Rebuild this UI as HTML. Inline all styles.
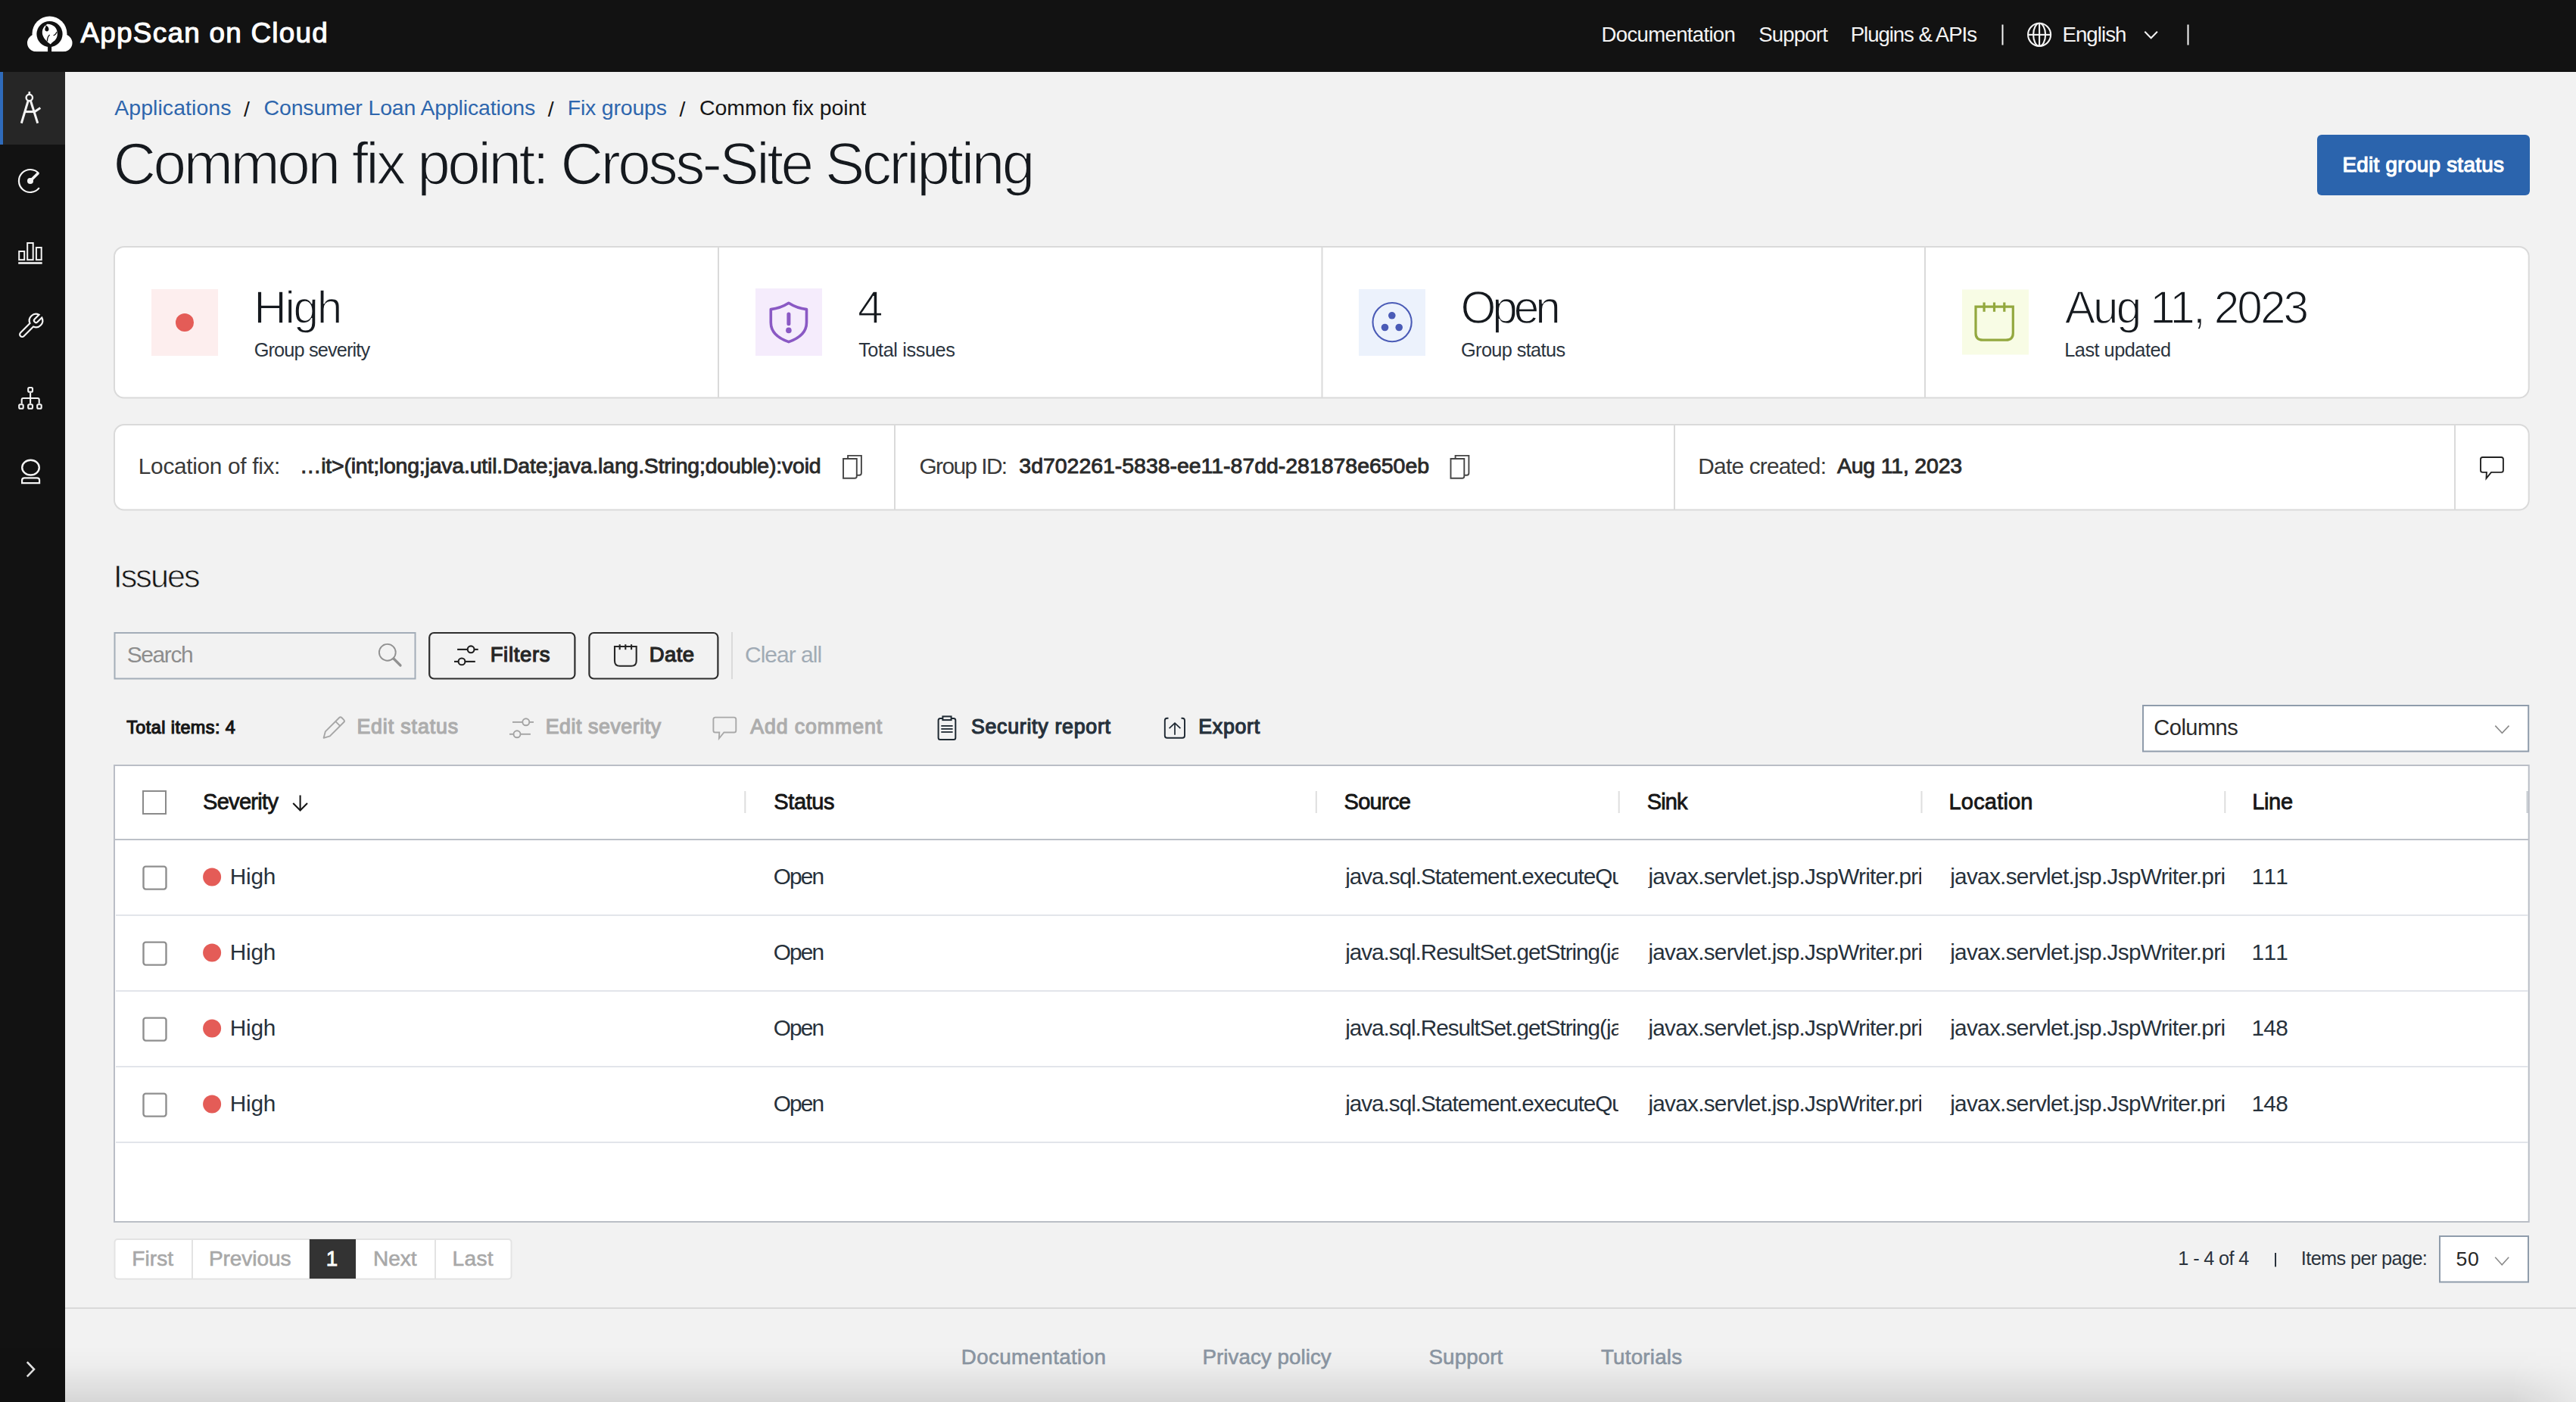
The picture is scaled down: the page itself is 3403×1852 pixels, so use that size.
<!DOCTYPE html>
<html><head><meta charset="utf-8"><title>Common fix point: Cross-Site Scripting</title>
<style>
html,body{margin:0;padding:0;}
body{width:3403px;height:1852px;overflow:hidden;position:relative;background:#f2f2f2;font-family:"Liberation Sans",sans-serif;}
.ov{position:absolute;left:0;top:0;}
.t{position:absolute;white-space:nowrap;line-height:1;}
.shade{position:absolute;left:0;top:1778px;width:3403px;height:74px;background:linear-gradient(to bottom,rgba(0,0,0,0) 0%,rgba(0,0,0,0.02) 35%,rgba(0,0,0,0.07) 70%,rgba(0,0,0,0.115) 100%);pointer-events:none;-webkit-mask-image:linear-gradient(to right,#000 0%,#000 97.5%,rgba(0,0,0,0.35) 100%);mask-image:linear-gradient(to right,#000 0%,#000 97.5%,rgba(0,0,0,0.35) 100%);}
</style></head><body>

<svg class="ov" width="3403" height="1852" viewBox="0 0 3403 1852"><rect x="0" y="0" width="3403" height="95" fill="#121212"/><rect x="0" y="95" width="86" height="1757" fill="#121212"/><rect x="0" y="95" width="86" height="96" fill="#262626"/><rect x="0" y="95" width="4" height="96" fill="#2f6bbb"/><g fill="#ffffff"><circle cx="65.5" cy="44.6" r="23"/><circle cx="47.4" cy="56.7" r="11.4"/><circle cx="84.1" cy="56.7" r="11.4"/><rect x="47.4" y="50" width="36.7" height="18.1"/></g><circle cx="65.5" cy="45" r="17.1" fill="#121212"/><rect x="63.1" y="56" width="5" height="13" fill="#121212"/><path d="M62.5 31.7 Q68.5 31.8 72.5 35.5 Q76.3 40 75.8 46 Q75 52 70.7 54.8 Q68.3 56.6 66.8 58.6 Q62.8 56 59.5 52 Q55.6 47 55.8 42 Q56.2 35.5 62.5 31.7 Z" fill="#ffffff"/><path d="M59.8 33.2 Q63.8 34.2 64.5 38.2 Q64.6 41.3 61.8 41.4 Q59.1 41.2 59.3 38.3 Q59.6 36.2 60.6 35.2 Z" fill="#121212"/><path d="M65.6 46 Q62.3 48.8 62.5 54.6" fill="none" stroke="#121212" stroke-width="1.3"/><path d="M75.2 42.2 Q73.6 45.6 70.6 47" fill="none" stroke="#121212" stroke-width="1.3"/><rect x="2644.5" y="32.5" width="2" height="27" fill="#f4f4f4"/><rect x="2889.5" y="32.5" width="2" height="27" fill="#f4f4f4"/><g fill="none" stroke="#f4f4f4" stroke-width="2.1"><circle cx="2694.1" cy="45.8" r="15"/><ellipse cx="2694.1" cy="45.8" rx="8" ry="15"/><line x1="2694.1" y1="30.8" x2="2694.1" y2="60.8"/><line x1="2679.1" y1="45.9" x2="2709.1" y2="45.9"/></g><polyline points="2833.3,41.8 2841.6,50.3 2849.9,41.8" fill="none" stroke="#f4f4f4" stroke-width="2"/><g fill="none" stroke="#f4f4f4" stroke-width="2.6" stroke-linecap="butt"><circle cx="38.8" cy="129" r="4.2" stroke-width="2.4"/><line x1="38.8" y1="121" x2="38.8" y2="125" stroke-width="2.6"/><line x1="37.2" y1="133" x2="28.3" y2="162.8" stroke-width="3"/><line x1="40.4" y1="133" x2="49.8" y2="162.8" stroke-width="3"/><line x1="33.8" y1="147.6" x2="46" y2="147.6" stroke-width="3"/><line x1="45.2" y1="148" x2="53.3" y2="142.6" stroke-width="3"/><path d="M51.3 229.2 A15 15 0 1 0 51.8 248.2" stroke-width="2.2"/><line x1="40" y1="239" x2="50.6" y2="228.4" stroke-width="3.6"/></g><circle cx="40" cy="239" r="4" fill="#f4f4f4"/><g fill="none" stroke="#f4f4f4" stroke-width="2"><rect x="25.2" y="332" width="7" height="11.2"/><rect x="36.2" y="321" width="7.5" height="22.2"/><rect x="47.9" y="327" width="6.8" height="16.2"/></g><rect x="24.2" y="346.2" width="31.5" height="2.6" fill="#f4f4f4"/><path transform="translate(40.3,430.8) rotate(45) scale(0.99) translate(0,-3.3)" fill="none" stroke="#f4f4f4" stroke-width="2.2" d="M-3.2 1.2 L-3.2 19 A3.2 3.2 0 0 0 3.2 19 L3.2 1.2 A8.8 8.8 0 0 0 2.7 -15.4 L2.7 -7.2 A2.7 2.7 0 0 1 -2.7 -7.2 L-2.7 -15.4 A8.8 8.8 0 0 0 -3.2 1.2Z"/><g fill="none" stroke="#f4f4f4" stroke-width="2.1"><rect x="37.2" y="512" width="5.8" height="5.7" rx="1.5"/><line x1="40.1" y1="518.7" x2="40.1" y2="533.2"/><path d="M28.7 533.2 V528 Q28.7 526 30.7 526 H49.7 Q51.7 526 51.7 528 V533.2"/><rect x="25.2" y="534.2" width="5.5" height="5.5" rx="1.5"/><rect x="37.2" y="534.2" width="5.8" height="5.5" rx="1.5"/><rect x="49.2" y="534.2" width="5.5" height="5.5" rx="1.5"/><ellipse cx="40.5" cy="617.6" rx="11.3" ry="9.9" stroke-width="2.4"/><path d="M29.1 638.1 V634.2 Q29.1 631.3 32.3 631.3 H49 Q52.1 631.3 52.1 634.2 V638.1 Z" stroke-width="2.2"/><polyline points="35.8,1799.2 45,1808.8 35.8,1818.4" stroke="#e6e6e6" stroke-width="2.6"/></g><rect x="3061" y="178" width="281" height="80" rx="6" fill="#2b64ad"/><rect x="151" y="326" width="3189.7" height="199.5" rx="13" fill="#ffffff" stroke="#dadada" stroke-width="2"/><rect x="948" y="327" width="2" height="198" fill="#dadada"/><rect x="1745.5" y="327" width="2" height="198" fill="#dadada"/><rect x="2542" y="327" width="2" height="198" fill="#dadada"/><rect x="200" y="382" width="88" height="88" fill="#fdeeee"/><circle cx="244" cy="426" r="12" fill="#e45c57"/><rect x="998" y="381" width="88" height="89" fill="#f5ecfc"/><path d="M1041.9 400.3 Q1031 407.3 1018.3 408.6 V426 Q1018.3 443.5 1041.9 451.6 Q1065.5 443.5 1065.5 426 V408.6 Q1052.8 407.3 1041.9 400.3 Z" fill="none" stroke="#8a59c4" stroke-width="3.6" stroke-linejoin="round"/><line x1="1041.9" y1="415" x2="1041.9" y2="427.8" stroke="#8a59c4" stroke-width="5" stroke-linecap="round"/><circle cx="1041.9" cy="436.4" r="3.8" fill="#8a59c4"/><rect x="1795" y="382" width="88" height="88" fill="#ecf2fc"/><circle cx="1839.1" cy="425.6" r="25.6" fill="none" stroke="#4a5bb6" stroke-width="2.1"/><g fill="#4a5bb6"><circle cx="1838.8" cy="416.8" r="4.8"/><circle cx="1829.5" cy="432.5" r="4.8"/><circle cx="1848.2" cy="432.5" r="4.8"/></g><rect x="2592" y="382.5" width="88" height="86" fill="#f8fce5"/><g fill="none" stroke="#93a83f" stroke-width="3.2"><path d="M2610 405.2 H2659.3 V440 Q2659.3 449.2 2650 449.2 H2619.3 Q2610 449.2 2610 440 Z"/><line x1="2621.1" y1="399.5" x2="2621.1" y2="411.8"/><line x1="2634.5" y1="399.5" x2="2634.5" y2="411.8"/><line x1="2647.8" y1="399.5" x2="2647.8" y2="411.8"/></g><rect x="151" y="561" width="3189.7" height="112.5" rx="13" fill="#ffffff" stroke="#dadada" stroke-width="2"/><rect x="1181" y="562" width="2" height="111" fill="#dadada"/><rect x="2211" y="562" width="2" height="111" fill="#dadada"/><rect x="3242" y="562" width="2" height="111" fill="#dadada"/><g fill="none" stroke="#454545" stroke-width="1.9"><path d="M1114 606 H1131.8 V629 Q1131.8 631.8 1129 631.8 H1114 Z"/><path d="M1120.1 605.5 V601.9 H1137.9 V625 Q1137.9 627.7 1135.1 627.7 H1132"/></g><g transform="translate(802.5,0)"><g fill="none" stroke="#454545" stroke-width="1.9"><path d="M1114 606 H1131.8 V629 Q1131.8 631.8 1129 631.8 H1114 Z"/><path d="M1120.1 605.5 V601.9 H1137.9 V625 Q1137.9 627.7 1135.1 627.7 H1132"/></g></g><path d="M3279.6 604 H3304.3 Q3306.9 604 3306.9 606.6 V621.3 Q3306.9 623.9 3304.3 623.9 H3291 L3284.5 631.9 L3284.9 623.9 H3279.6 Q3277 623.9 3277 621.3 V606.6 Q3277 604 3279.6 604 Z" fill="none" stroke="#222222" stroke-width="1.9" stroke-linejoin="miter"/><rect x="151.5" y="836" width="397" height="60.5" fill="none" stroke="#a3adb8" stroke-width="2"/><g fill="none" stroke="#919191"><circle cx="511.8" cy="861.8" r="10.9" stroke-width="1.9"/><line x1="520" y1="870" x2="529" y2="879" stroke-width="3.2" stroke-linecap="round"/></g><rect x="567.2" y="836" width="192.2" height="60.5" rx="6" fill="none" stroke="#2e2e2e" stroke-width="2.2"/><rect x="778.4" y="836" width="170" height="60.5" rx="6" fill="none" stroke="#2e2e2e" stroke-width="2.2"/><g stroke="#1f1f1f" stroke-width="2.1" fill="#f2f2f2"><line x1="604.1" y1="857.9" x2="631.7" y2="857.9"/><circle cx="622.1" cy="857.8" r="4.4"/><line x1="600" y1="873.9" x2="627.8" y2="873.9"/><circle cx="610" cy="873.9" r="4.4"/></g><g fill="none" stroke="#262626" stroke-width="2.1"><path d="M812 854 H840.7 V873 Q840.7 879.8 834 879.8 H818.7 Q812 879.8 812 873 Z"/><line x1="818.7" y1="851.2" x2="818.7" y2="858.2"/><line x1="826.3" y1="851.2" x2="826.3" y2="858.2"/><line x1="834.1" y1="851.2" x2="834.1" y2="858.2"/></g><rect x="966" y="835" width="2" height="62" fill="#dadada"/><g fill="none" stroke="#a6a6a6" stroke-width="1.9" stroke-linejoin="round"><path d="M427.6 974.8 L429.8 966.4 L448.2 948 Q449.8 946.4 451.4 948 L454.2 950.8 Q455.8 952.4 454.2 954 L435.8 972.4 Z"/><line x1="443.4" y1="953.2" x2="449.4" y2="959.2"/></g><g stroke="#a4a4a4" stroke-width="1.9" fill="#f2f2f2"><line x1="677" y1="953.9" x2="705" y2="953.9"/><circle cx="694.8" cy="953.8" r="4.5"/><line x1="673" y1="969.8" x2="700.9" y2="969.8"/><circle cx="683" cy="969.8" r="4.5"/></g><g transform="translate(-2334.6,343.6)"><path d="M3279.6 604 H3304.3 Q3306.9 604 3306.9 606.6 V621.3 Q3306.9 623.9 3304.3 623.9 H3291 L3284.5 631.9 L3284.9 623.9 H3279.6 Q3277 623.9 3277 621.3 V606.6 Q3277 604 3279.6 604 Z" fill="none" stroke="#a9a9a9" stroke-width="1.9" stroke-linejoin="miter"/></g><g fill="none" stroke="#1f2a33" stroke-width="2"><rect x="1239.6" y="949" width="22.7" height="27.9" rx="2.5"/><rect x="1245.4" y="946.4" width="11.2" height="4.7" fill="#f2f2f2"/><line x1="1243.3" y1="958.9" x2="1258.6" y2="958.9" stroke-width="1.8"/><line x1="1243.3" y1="962.9" x2="1258.6" y2="962.9" stroke-width="1.8"/><line x1="1243.3" y1="967" x2="1258.6" y2="967" stroke-width="1.8"/></g><g fill="none" stroke="#1d2731" stroke-width="1.9"><path d="M1543.5 948.7 H1541.8 Q1538.8 948.7 1538.8 951.7 V971.7 Q1538.8 974.7 1541.8 974.7 H1562 Q1565 974.7 1565 971.7 V951.7 Q1565 948.7 1562 948.7 H1560.5"/><line x1="1552" y1="956" x2="1552" y2="970.8" stroke-width="1.7"/><polyline points="1544.6,962.1 1552,955.1 1559.4,962.1" stroke-width="1.7"/></g><rect x="2831" y="932" width="509.2" height="60.5" fill="#ffffff" stroke="#8f9cab" stroke-width="2"/><polyline points="3296.3,958.6 3305.4,968.4 3314.5,958.6" fill="none" stroke="#8a8a8a" stroke-width="1.6"/><rect x="151" y="1011" width="3189.7" height="603" fill="#ffffff" stroke="#babec6" stroke-width="2"/><rect x="151" y="1108" width="3190" height="2" fill="#bcc0c8"/><rect x="153" y="1208" width="3187" height="2" fill="#e2e5ea"/><rect x="153" y="1308" width="3187" height="2" fill="#e2e5ea"/><rect x="153" y="1408" width="3187" height="2" fill="#e2e5ea"/><rect x="153" y="1508" width="3187" height="2" fill="#e2e5ea"/><rect x="189" y="1045" width="30" height="30" fill="none" stroke="#8a8a8a" stroke-width="2"/><g fill="none" stroke="#161616" stroke-width="2.1"><line x1="396.6" y1="1050.5" x2="396.6" y2="1070"/><polyline points="387.2,1061 396.6,1070.4 406,1061"/></g><rect x="983.3" y="1045" width="2" height="29" fill="#dedede"/><rect x="1737.8" y="1045" width="2" height="29" fill="#dedede"/><rect x="2137.7" y="1045" width="2" height="29" fill="#dedede"/><rect x="2537.5" y="1045" width="2" height="29" fill="#dedede"/><rect x="2938.3" y="1045" width="2" height="29" fill="#dedede"/><rect x="3337.5" y="1045" width="2.5" height="29" fill="#c9ced4"/><rect x="189.5" y="1144.6" width="30" height="30" rx="3" fill="none" stroke="#8f8f8f" stroke-width="2.4"/><circle cx="280.1" cy="1158.4" r="12" fill="#e45c57"/><rect x="189.5" y="1244.6" width="30" height="30" rx="3" fill="none" stroke="#8f8f8f" stroke-width="2.4"/><circle cx="280.1" cy="1258.4" r="12" fill="#e45c57"/><rect x="189.5" y="1344.6" width="30" height="30" rx="3" fill="none" stroke="#8f8f8f" stroke-width="2.4"/><circle cx="280.1" cy="1358.4" r="12" fill="#e45c57"/><rect x="189.5" y="1444.6" width="30" height="30" rx="3" fill="none" stroke="#8f8f8f" stroke-width="2.4"/><circle cx="280.1" cy="1458.4" r="12" fill="#e45c57"/><rect x="151.5" y="1637" width="524" height="52.5" rx="4" fill="#ffffff" stroke="#e3e3e3" stroke-width="2"/><rect x="253" y="1637" width="2" height="52" fill="#e3e3e3"/><rect x="574" y="1637" width="2" height="52" fill="#e3e3e3"/><rect x="408.8" y="1637" width="61.2" height="52" fill="#333333"/><rect x="3005" y="1655" width="2" height="18.4" fill="#2a323c"/><rect x="3223" y="1633" width="117" height="60.5" fill="#ffffff" stroke="#8f9cab" stroke-width="2"/><polyline points="3296.2,1660.8 3305.2,1670.7 3314.2,1660.8" fill="none" stroke="#8a8a8a" stroke-width="1.6"/><rect x="86" y="1727" width="3317" height="2" fill="#d9d9d9"/></svg>
<div class="t" id="t0" style="left:106.48px;top:26.49px;font-size:36.92px;color:#ffffff;letter-spacing:1.238px;-webkit-text-stroke:1.10px #ffffff;"><span class="m" id="t0_p">AppScan on Cloud</span></div>
<div class="t" id="t1" style="left:2115.53px;top:31.72px;font-size:27.62px;color:#f4f4f4;letter-spacing:-0.695px;"><span class="m" id="t1_p">Documentation</span></div>
<div class="t" id="t2" style="left:2323.25px;top:31.72px;font-size:27.62px;color:#f4f4f4;letter-spacing:-0.858px;"><span class="m" id="t2_p">Support</span></div>
<div class="t" id="t3" style="left:2444.73px;top:31.72px;font-size:27.62px;color:#f4f4f4;letter-spacing:-1.064px;"><span class="m" id="t3_p">Plugins &amp; APIs</span></div>
<div class="t" id="t4" style="left:2724.43px;top:31.72px;font-size:27.62px;color:#f4f4f4;letter-spacing:-0.917px;"><span class="m" id="t4_p">English</span></div>
<div class="t" id="t5" style="left:151.19px;top:128.48px;font-size:28.49px;color:#2e66ad;letter-spacing:0.067px;"><span class="m" id="t5_p">Applications</span></div>
<div class="t" id="t6" style="left:322.00px;top:130.48px;font-size:28.49px;color:#161616;"><span class="m" id="t6_p">/</span></div>
<div class="t" id="t7" style="left:348.55px;top:128.48px;font-size:28.49px;color:#2e66ad;letter-spacing:-0.155px;"><span class="m" id="t7_p">Consumer Loan Applications</span></div>
<div class="t" id="t8" style="left:723.75px;top:130.48px;font-size:28.49px;color:#161616;"><span class="m" id="t8_p">/</span></div>
<div class="t" id="t9" style="left:749.66px;top:128.48px;font-size:28.49px;color:#2e66ad;letter-spacing:-0.180px;"><span class="m" id="t9_p">Fix groups</span></div>
<div class="t" id="t10" style="left:897.50px;top:130.48px;font-size:28.49px;color:#161616;"><span class="m" id="t10_p">/</span></div>
<div class="t" id="t11" style="left:924.05px;top:128.48px;font-size:28.49px;color:#161616;letter-spacing:-0.099px;"><span class="m" id="t11_p">Common fix point</span></div>
<div class="t" id="t12" style="left:149.42px;top:177.37px;font-size:78.34px;color:#15191e;letter-spacing:-3.437px;-webkit-text-stroke:1.60px #f2f2f2;"><span class="m" id="t12_p">Common fix point: Cross-Site Scripting</span></div>
<div class="t" id="t13" style="left:3094.52px;top:203.89px;font-size:27.76px;color:#ffffff;letter-spacing:0.314px;-webkit-text-stroke:1.20px #ffffff;"><span class="m" id="t13_p">Edit group status</span></div>
<div class="t" id="t14" style="left:335.15px;top:376.23px;font-size:60.32px;color:#15191e;letter-spacing:-2.260px;-webkit-text-stroke:1.40px #ffffff;"><span class="m" id="t14_p">High</span></div>
<div class="t" id="t15" style="left:1132.92px;top:376.23px;font-size:60.32px;color:#15191e;-webkit-text-stroke:1.40px #ffffff;"><span class="m" id="t15_p">4</span></div>
<div class="t" id="t16" style="left:1929.44px;top:376.23px;font-size:60.32px;color:#15191e;letter-spacing:-5.058px;-webkit-text-stroke:1.40px #ffffff;"><span class="m" id="t16_p">Open</span></div>
<div class="t" id="t17" style="left:2727.78px;top:376.23px;font-size:60.32px;color:#15191e;letter-spacing:-2.910px;-webkit-text-stroke:1.40px #ffffff;"><span class="m" id="t17_p">Aug 11, 2023</span></div>
<div class="t" id="t18" style="left:335.73px;top:449.59px;font-size:25.29px;color:#2b343e;letter-spacing:-0.851px;"><span class="m" id="t18_p">Group severity</span></div>
<div class="t" id="t19" style="left:1134.13px;top:449.59px;font-size:25.29px;color:#2b343e;letter-spacing:-0.392px;"><span class="m" id="t19_p">Total issues</span></div>
<div class="t" id="t20" style="left:1930.03px;top:449.59px;font-size:25.29px;color:#2b343e;letter-spacing:-0.606px;"><span class="m" id="t20_p">Group status</span></div>
<div class="t" id="t21" style="left:2727.23px;top:449.59px;font-size:25.29px;color:#2b343e;letter-spacing:-0.482px;"><span class="m" id="t21_p">Last updated</span></div>
<div class="t" id="t22" style="left:182.86px;top:600.77px;font-size:29.80px;color:#393939;letter-spacing:-0.312px;"><span class="m" id="t22_p">Location of fix:</span></div>
<div class="t" id="t23" style="left:395.88px;top:601.43px;font-size:28.49px;color:#2a2a2a;letter-spacing:-0.209px;-webkit-text-stroke:0.90px #2a2a2a;"><span class="m" id="t23_p">…it&gt;(int;long;java.util.Date;java.lang.String;double):void</span></div>
<div class="t" id="t24" style="left:1214.50px;top:600.77px;font-size:29.80px;color:#393939;letter-spacing:-1.569px;"><span class="m" id="t24_p">Group ID:</span></div>
<div class="t" id="t25" style="left:1346.36px;top:601.43px;font-size:28.49px;color:#2a2a2a;letter-spacing:-0.031px;-webkit-text-stroke:0.90px #2a2a2a;"><span class="m" id="t25_p">3d702261-5838-ee11-87dd-281878e650eb</span></div>
<div class="t" id="t26" style="left:2243.36px;top:600.77px;font-size:29.80px;color:#393939;letter-spacing:-0.777px;"><span class="m" id="t26_p">Date created:</span></div>
<div class="t" id="t27" style="left:2426.89px;top:601.43px;font-size:28.49px;color:#2a2a2a;letter-spacing:-0.187px;-webkit-text-stroke:0.90px #2a2a2a;"><span class="m" id="t27_p">Aug 11, 2023</span></div>
<div class="t" id="t28" style="left:149.72px;top:739.85px;font-size:43.17px;color:#161616;letter-spacing:-1.958px;-webkit-text-stroke:0.80px #f2f2f2;"><span class="m" id="t28_p">Issues</span></div>
<div class="t" id="t29" style="left:167.64px;top:849.95px;font-size:29.94px;color:#8d8d8d;letter-spacing:-1.371px;"><span class="m" id="t29_p">Search</span></div>
<div class="t" id="t30" style="left:647.65px;top:851.34px;font-size:27.47px;color:#262626;letter-spacing:0.694px;-webkit-text-stroke:1.20px #262626;"><span class="m" id="t30_p">Filters</span></div>
<div class="t" id="t31" style="left:857.65px;top:851.34px;font-size:27.47px;color:#262626;letter-spacing:0.448px;-webkit-text-stroke:1.20px #262626;"><span class="m" id="t31_p">Date</span></div>
<div class="t" id="t32" style="left:983.98px;top:849.95px;font-size:29.94px;color:#a1abb5;letter-spacing:-0.961px;"><span class="m" id="t32_p">Clear all</span></div>
<div class="t" id="t33" style="left:167.17px;top:949.59px;font-size:23.40px;color:#161616;letter-spacing:0.455px;-webkit-text-stroke:1.20px #161616;"><span class="m" id="t33_p">Total items: 4</span></div>
<div class="t" id="t34" style="left:471.41px;top:947.36px;font-size:26.74px;color:#adadad;letter-spacing:0.883px;-webkit-text-stroke:1.20px #adadad;"><span class="m" id="t34_p">Edit status</span></div>
<div class="t" id="t35" style="left:720.71px;top:947.36px;font-size:26.74px;color:#adadad;letter-spacing:0.570px;-webkit-text-stroke:1.20px #adadad;"><span class="m" id="t35_p">Edit severity</span></div>
<div class="t" id="t36" style="left:991.25px;top:947.36px;font-size:26.74px;color:#adadad;letter-spacing:0.891px;-webkit-text-stroke:1.20px #adadad;"><span class="m" id="t36_p">Add comment</span></div>
<div class="t" id="t37" style="left:1282.89px;top:947.36px;font-size:26.74px;color:#26313b;letter-spacing:0.733px;-webkit-text-stroke:1.20px #26313b;"><span class="m" id="t37_p">Security report</span></div>
<div class="t" id="t38" style="left:1583.21px;top:947.36px;font-size:26.74px;color:#26313b;letter-spacing:0.742px;-webkit-text-stroke:1.20px #26313b;"><span class="m" id="t38_p">Export</span></div>
<div class="t" id="t39" style="left:2845.32px;top:946.69px;font-size:29.07px;color:#2b2b2b;letter-spacing:-0.543px;"><span class="m" id="t39_p">Columns</span></div>
<div class="t" id="t40" style="left:267.98px;top:1044.69px;font-size:29.07px;color:#161616;letter-spacing:-0.715px;-webkit-text-stroke:0.80px #161616;"><span class="m" id="t40_p">Severity</span></div>
<div class="t" id="t41" style="left:1022.28px;top:1044.69px;font-size:29.07px;color:#161616;letter-spacing:-0.407px;-webkit-text-stroke:0.80px #161616;"><span class="m" id="t41_p">Status</span></div>
<div class="t" id="t42" style="left:1775.58px;top:1044.69px;font-size:29.07px;color:#161616;letter-spacing:-0.756px;-webkit-text-stroke:0.80px #161616;"><span class="m" id="t42_p">Source</span></div>
<div class="t" id="t43" style="left:2175.78px;top:1044.69px;font-size:29.07px;color:#161616;letter-spacing:-0.956px;-webkit-text-stroke:0.80px #161616;"><span class="m" id="t43_p">Sink</span></div>
<div class="t" id="t44" style="left:2574.52px;top:1044.69px;font-size:29.07px;color:#161616;letter-spacing:0.155px;-webkit-text-stroke:0.80px #161616;"><span class="m" id="t44_p">Location</span></div>
<div class="t" id="t45" style="left:2975.22px;top:1044.69px;font-size:29.07px;color:#161616;letter-spacing:-0.359px;-webkit-text-stroke:0.80px #161616;"><span class="m" id="t45_p">Line</span></div>
<div class="t" id="t46" style="left:303.66px;top:1142.97px;font-size:29.80px;color:#27313b;letter-spacing:-0.206px;"><span class="m" id="t46_p">High</span></div>
<div class="t" id="t47" style="left:1021.79px;top:1142.97px;font-size:29.80px;color:#27313b;letter-spacing:-1.853px;"><span class="m" id="t47_p">Open</span></div>
<div class="t" id="t48" style="left:1777.23px;top:1142.97px;font-size:29.80px;color:#27313b;letter-spacing:-1.067px;width:361.27px;overflow:hidden;"><span class="m" id="t48_p">java.sql.Statement.executeQ</span>uery(java.lang.String)</div>
<div class="t" id="t49" style="left:2177.43px;top:1142.97px;font-size:29.80px;color:#27313b;letter-spacing:-0.756px;width:361.07px;overflow:hidden;"><span class="m" id="t49_p">javax.servlet.jsp.JspWriter.pri</span>nt(java.lang.String)</div>
<div class="t" id="t50" style="left:2576.13px;top:1142.97px;font-size:29.80px;color:#27313b;letter-spacing:-0.713px;width:362.87px;overflow:hidden;"><span class="m" id="t50_p">javax.servlet.jsp.JspWriter.pri</span>nt(java.lang.String)</div>
<div class="t" id="t51" style="left:2974.43px;top:1142.97px;font-size:29.80px;color:#27313b;letter-spacing:1.614px;"><span class="m" id="t51_p">111</span></div>
<div class="t" id="t52" style="left:303.66px;top:1242.97px;font-size:29.80px;color:#27313b;letter-spacing:-0.206px;"><span class="m" id="t52_p">High</span></div>
<div class="t" id="t53" style="left:1021.79px;top:1242.97px;font-size:29.80px;color:#27313b;letter-spacing:-1.853px;"><span class="m" id="t53_p">Open</span></div>
<div class="t" id="t54" style="left:1777.23px;top:1242.97px;font-size:29.80px;color:#27313b;letter-spacing:-1.079px;width:361.27px;overflow:hidden;"><span class="m" id="t54_p">java.sql.ResultSet.getString(j</span>ava.lang.String)</div>
<div class="t" id="t55" style="left:2177.43px;top:1242.97px;font-size:29.80px;color:#27313b;letter-spacing:-0.756px;width:361.07px;overflow:hidden;"><span class="m" id="t55_p">javax.servlet.jsp.JspWriter.pri</span>nt(java.lang.String)</div>
<div class="t" id="t56" style="left:2576.13px;top:1242.97px;font-size:29.80px;color:#27313b;letter-spacing:-0.713px;width:362.87px;overflow:hidden;"><span class="m" id="t56_p">javax.servlet.jsp.JspWriter.pri</span>nt(java.lang.String)</div>
<div class="t" id="t57" style="left:2974.43px;top:1242.97px;font-size:29.80px;color:#27313b;letter-spacing:1.614px;"><span class="m" id="t57_p">111</span></div>
<div class="t" id="t58" style="left:303.66px;top:1342.97px;font-size:29.80px;color:#27313b;letter-spacing:-0.206px;"><span class="m" id="t58_p">High</span></div>
<div class="t" id="t59" style="left:1021.79px;top:1342.97px;font-size:29.80px;color:#27313b;letter-spacing:-1.853px;"><span class="m" id="t59_p">Open</span></div>
<div class="t" id="t60" style="left:1777.23px;top:1342.97px;font-size:29.80px;color:#27313b;letter-spacing:-1.079px;width:361.27px;overflow:hidden;"><span class="m" id="t60_p">java.sql.ResultSet.getString(j</span>ava.lang.String)</div>
<div class="t" id="t61" style="left:2177.43px;top:1342.97px;font-size:29.80px;color:#27313b;letter-spacing:-0.756px;width:361.07px;overflow:hidden;"><span class="m" id="t61_p">javax.servlet.jsp.JspWriter.pri</span>nt(java.lang.String)</div>
<div class="t" id="t62" style="left:2576.13px;top:1342.97px;font-size:29.80px;color:#27313b;letter-spacing:-0.713px;width:362.87px;overflow:hidden;"><span class="m" id="t62_p">javax.servlet.jsp.JspWriter.pri</span>nt(java.lang.String)</div>
<div class="t" id="t63" style="left:2974.43px;top:1342.97px;font-size:29.80px;color:#27313b;letter-spacing:-0.677px;"><span class="m" id="t63_p">148</span></div>
<div class="t" id="t64" style="left:303.66px;top:1442.97px;font-size:29.80px;color:#27313b;letter-spacing:-0.206px;"><span class="m" id="t64_p">High</span></div>
<div class="t" id="t65" style="left:1021.79px;top:1442.97px;font-size:29.80px;color:#27313b;letter-spacing:-1.853px;"><span class="m" id="t65_p">Open</span></div>
<div class="t" id="t66" style="left:1777.23px;top:1442.97px;font-size:29.80px;color:#27313b;letter-spacing:-1.067px;width:361.27px;overflow:hidden;"><span class="m" id="t66_p">java.sql.Statement.executeQ</span>uery(java.lang.String)</div>
<div class="t" id="t67" style="left:2177.43px;top:1442.97px;font-size:29.80px;color:#27313b;letter-spacing:-0.756px;width:361.07px;overflow:hidden;"><span class="m" id="t67_p">javax.servlet.jsp.JspWriter.pri</span>nt(java.lang.String)</div>
<div class="t" id="t68" style="left:2576.13px;top:1442.97px;font-size:29.80px;color:#27313b;letter-spacing:-0.713px;width:362.87px;overflow:hidden;"><span class="m" id="t68_p">javax.servlet.jsp.JspWriter.pri</span>nt(java.lang.String)</div>
<div class="t" id="t69" style="left:2974.43px;top:1442.97px;font-size:29.80px;color:#27313b;letter-spacing:-0.677px;"><span class="m" id="t69_p">148</span></div>
<div class="t" id="t70" style="left:174.20px;top:1649.15px;font-size:28.05px;color:#a8a8a8;letter-spacing:0.094px;-webkit-text-stroke:0.60px #a8a8a8;"><span class="m" id="t70_p">First</span></div>
<div class="t" id="t71" style="left:276.00px;top:1649.15px;font-size:28.05px;color:#a8a8a8;letter-spacing:-0.094px;-webkit-text-stroke:0.60px #a8a8a8;"><span class="m" id="t71_p">Previous</span></div>
<div class="t" id="t72" style="left:430.79px;top:1649.29px;font-size:27.76px;color:#ffffff;-webkit-text-stroke:0.80px #ffffff;"><span class="m" id="t72_p">1</span></div>
<div class="t" id="t73" style="left:493.00px;top:1649.15px;font-size:28.05px;color:#a8a8a8;letter-spacing:-0.005px;-webkit-text-stroke:0.60px #a8a8a8;"><span class="m" id="t73_p">Next</span></div>
<div class="t" id="t74" style="left:597.50px;top:1649.15px;font-size:28.05px;color:#a8a8a8;letter-spacing:0.380px;-webkit-text-stroke:0.60px #a8a8a8;"><span class="m" id="t74_p">Last</span></div>
<div class="t" id="t75" style="left:2877.37px;top:1650.19px;font-size:25.29px;color:#2a323c;letter-spacing:-0.657px;"><span class="m" id="t75_p">1 - 4 of 4</span></div>
<div class="t" id="t76" style="left:3039.87px;top:1650.19px;font-size:25.29px;color:#2a323c;letter-spacing:-0.616px;"><span class="m" id="t76_p">Items per page:</span></div>
<div class="t" id="t77" style="left:3244.43px;top:1649.98px;font-size:26.60px;color:#262626;letter-spacing:0.910px;"><span class="m" id="t77_p">50</span></div>
<div class="t" id="t78" style="left:1269.82px;top:1779.09px;font-size:27.76px;color:#8b96a3;letter-spacing:0.369px;-webkit-text-stroke:0.60px #8b96a3;"><span class="m" id="t78_p">Documentation</span></div>
<div class="t" id="t79" style="left:1588.42px;top:1779.09px;font-size:27.76px;color:#8b96a3;letter-spacing:0.053px;-webkit-text-stroke:0.60px #8b96a3;"><span class="m" id="t79_p">Privacy policy</span></div>
<div class="t" id="t80" style="left:1887.54px;top:1779.09px;font-size:27.76px;color:#8b96a3;letter-spacing:0.077px;-webkit-text-stroke:0.60px #8b96a3;"><span class="m" id="t80_p">Support</span></div>
<div class="t" id="t81" style="left:2114.88px;top:1779.09px;font-size:27.76px;color:#8b96a3;letter-spacing:0.230px;-webkit-text-stroke:0.60px #8b96a3;"><span class="m" id="t81_p">Tutorials</span></div>
<div class="shade"></div>
</body></html>
